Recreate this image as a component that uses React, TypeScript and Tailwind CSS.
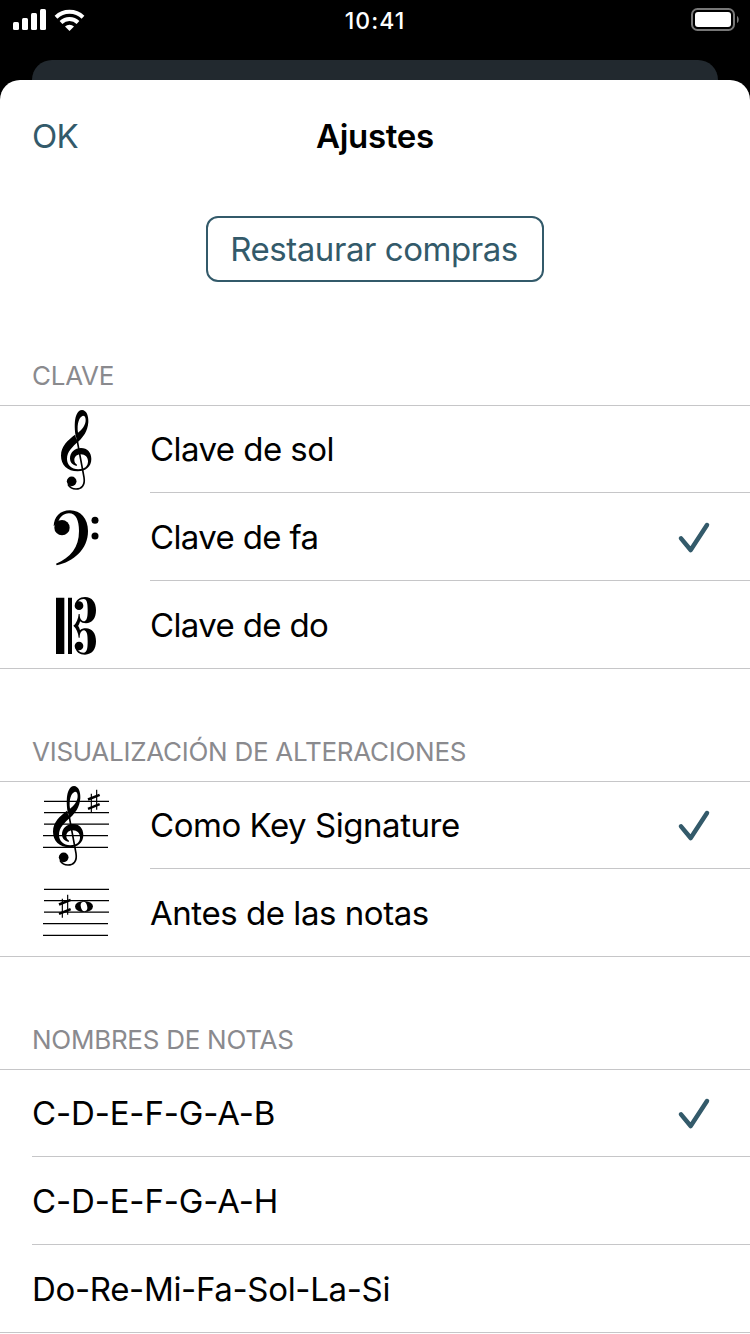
import type { ReactNode } from "react";
import clsx from "clsx";

const TREBLE_HEAD =
  "M140 122 C132 92 129 32 156 30 C170 31 176 48 175 66 C173 95 159 111 146 124 C127 141 111 155 111 177 C111 194 124 208 145 208 C163 208 174 200 174 184 C174 172 166 163 152 163 C141 163 133 170 133 180 C133 187 136 191 141 194 L140 198 C129 196 120 188 120 175 C120 157 134 144 153 144 C172 144 184 158 184 177 C184 200 167 214 143 214 C112 214 93 194 93 167 C93 139 112 122 137 103 Z M144 98 C156 89 167 76 167 60 C167 51 164 47 159 47 C148 50 140 70 144 98 Z";

function TrebleClef() {
  return (
    <g>
      <path d={TREBLE_HEAD} fillRule="evenodd" />
      <path
        d="M141 118 L162 232 C166 256 154 267 138 267 C128 267 119 262 114 253"
        fill="none"
        stroke="#000"
        strokeWidth="5"
      />
      <circle cx="125" cy="244" r="14.500" />
    </g>
  );
}

function Sharp() {
  return (
    <g stroke="#000">
      <path d="M184 41V98M200 29V89" strokeWidth="3.500" />
      <path d="M174 58.500L209 44.500M174 86.500L209 72.500" strokeWidth="7.500" />
    </g>
  );
}

function Staff() {
  return (
    <path
      d="M42 64H237M42 98H237M42 132.500H237M39 167H234M39 202H234"
      stroke="#000"
      strokeWidth="4"
    />
  );
}

function RowIcon({ viewBox, children }: { viewBox: string; children: ReactNode }) {
  return (
    <svg viewBox={viewBox} className="ml-[30px] h-[88px] w-[100px] shrink-0">
      {children}
    </svg>
  );
}

const icons = {
  sol: (
    <RowIcon viewBox="0 15 300 264">
      <TrebleClef />
    </RowIcon>
  ),
  fa: (
    <RowIcon viewBox="0 -22 300 264">
      <circle cx="96" cy="82" r="23" />
      <path d="M71 78C72 50 90 30 120 30C152 30 174 55 174 92C174 148 130 184 80 195L78 190C122 172 147 142 147 92C147 60 138 39 117 39C100 39 90 50 85 64Z" />
      <circle cx="195" cy="60" r="10.500" />
      <circle cx="195" cy="107" r="10.500" />
    </RowIcon>
  ),
  do: (
    <RowIcon viewBox="0 -12 300 264">
      <path d="M78 38H103V207H78ZM114 38H126V207H114Z" />
      {["", "matrix(1 0 0 -1 0 245)"].map((transform) => (
        <g key={transform} transform={transform}>
          <circle cx="147" cy="62" r="13" />
          <path d="M135 60C137 45 149 36 165 36C186 36 198 52 198 76C198 100 186 115 168 115C160 115 154 113 150 109C149 115 147 119 144 123H130C139 115 145 102 146 87H149C149 96 151 103 155 106C158 109 162 110 165 108C172 104 173 92 173 76C173 55 171 42 161 42C153 42 147 46 144 51Z" />
        </g>
      ))}
    </RowIcon>
  ),
  keySignature: (
    <RowIcon viewBox="0 3 300 264">
      <Staff />
      <g transform="translate(-24 -12)">
        <TrebleClef />
      </g>
      <Sharp />
    </RowIcon>
  ),
  beforeNotes: (
    <RowIcon viewBox="0 -18 300 264">
      <g transform="translate(0 -21)">
        <Staff />
      </g>
      <g transform="translate(-87 30)">
        <Sharp />
      </g>
      <ellipse cx="162" cy="94.500" rx="27" ry="16.500" />
      <ellipse cx="162" cy="94.500" rx="9.500" ry="14" fill="#fff" transform="rotate(-14 162 94.500)" />
    </RowIcon>
  ),
};

type Option = { label: string; icon?: keyof typeof icons; checked?: boolean; tracking: string };

const sections: { title: string; options: Option[] }[] = [
  {
    title: "CLAVE",
    options: [
      { label: "Clave de sol", icon: "sol", tracking: "tracking-[-0.55px]" },
      { label: "Clave de fa", icon: "fa", checked: true, tracking: "tracking-[-0.65px]" },
      { label: "Clave de do", icon: "do", tracking: "tracking-[-0.65px]" },
    ],
  },
  {
    title: "VISUALIZACIÓN DE ALTERACIONES",
    options: [
      { label: "Como Key Signature", icon: "keySignature", checked: true, tracking: "tracking-[-0.46px]" },
      { label: "Antes de las notas", icon: "beforeNotes", tracking: "tracking-[-0.45px]" },
    ],
  },
  {
    title: "NOMBRES DE NOTAS",
    options: [
      { label: "C-D-E-F-G-A-B", checked: true, tracking: "tracking-[-0.15px]" },
      { label: "C-D-E-F-G-A-H", tracking: "tracking-[-0.15px]" },
      { label: "Do-Re-Mi-Fa-Sol-La-Si", tracking: "tracking-[-0.33px]" },
    ],
  },
];

function StatusBar() {
  return (
    <div className="grid h-10 grid-cols-3 text-white">
      <svg viewBox="0 0 100 40" className="h-10 w-[100px]" fill="#fff">
        <rect x="13" y="22" width="6" height="8" rx="1.500" />
        <rect x="22" y="18" width="6" height="12" rx="1.500" />
        <rect x="31" y="13" width="6" height="17" rx="1.500" />
        <rect x="40" y="9" width="6" height="21" rx="1.500" />
        <g fill="none" stroke="#fff" strokeWidth="4">
          <path d="M56 17.200A19.500 19.500 0 0 1 83 17.200" />
          <path d="M61 22.500A12.300 12.300 0 0 1 78 22.500" />
        </g>
        <path d="M69.500 31L65 26.500A6.500 6.500 0 0 1 74 26.500Z" />
      </svg>
      <span className="text-center text-[23px] leading-[42px] font-medium tracking-[1px]">10:41</span>
      <svg viewBox="0 0 60 40" className="h-10 w-[60px] justify-self-end">
        <rect x="2" y="9" width="42" height="21" rx="5.500" fill="none" stroke="#777" strokeWidth="2" />
        <rect x="5" y="12" width="36" height="15" rx="3" fill="#fff" />
        <path d="M47 16C49.300 17 49.300 22 47 23Z" fill="#777" />
      </svg>
    </div>
  );
}

function Check() {
  return (
    <svg viewBox="0 -51 270 264" className="h-[88px] w-[90px] shrink-0">
      <path
        d="M63 85L92 120L141 45"
        fill="none"
        stroke="#335a6a"
        strokeWidth="13.500"
        strokeLinecap="round"
        strokeLinejoin="round"
      />
    </svg>
  );
}

function Row({ option, last }: { option: Option; last: boolean }) {
  return (
    <li
      className={clsx(
        "flex h-[88px] first:-mt-px",
        last && "border-b border-[#c6c6c8]",
        !option.icon && "pl-8"
      )}
    >
      {option.icon && icons[option.icon]}
      <div
        className={clsx(
          "flex h-[88px] flex-1",
          option.icon && "ml-5",
          !last && "border-b border-[#c6c6c8]"
        )}
      >
        <span className={clsx("flex-1 text-[33px] leading-[89px] whitespace-nowrap", option.tracking)}>
          {option.label}
        </span>
        {option.checked && <Check />}
      </div>
    </li>
  );
}

export default function App() {
  return (
    <div className="flex h-[1334px] w-[750px] flex-col overflow-hidden bg-black font-['Inter',sans-serif] text-black">
      <StatusBar />
      <div className="mx-8 mt-5 h-5 shrink-0 rounded-t-[20px] bg-[#22292f]" />
      <main className="flex-1 rounded-t-[20px] bg-white">
        <header className="grid h-28 grid-cols-3 px-8 text-[33px] leading-[112px]">
          <button className="justify-self-start tracking-[-0.7px] text-[#335a6a]">OK</button>
          <h1 className="text-center font-semibold tracking-[-0.3px]">Ajustes</h1>
        </header>
        <div className="flex justify-center pt-6">
          <button className="h-[66px] w-[338px] rounded-xl border-2 border-[#335a6a] pr-0.5 text-[33px] leading-[63px] tracking-[-0.45px] whitespace-nowrap text-[#335a6a]">
            Restaurar compras
          </button>
        </div>
        <div className="pt-[11px]">
          {sections.map((section) => (
            <section key={section.title}>
              <h2 className="h-28 pt-[67px] pl-8 text-[26px] leading-8 tracking-[-0.27px] text-[#8a8a8e]">
                {section.title}
              </h2>
              <ul className="border-t border-[#c6c6c8]">
                {section.options.map((option, i) => (
                  <Row key={option.label} option={option} last={i === section.options.length - 1} />
                ))}
              </ul>
            </section>
          ))}
        </div>
      </main>
    </div>
  );
}
